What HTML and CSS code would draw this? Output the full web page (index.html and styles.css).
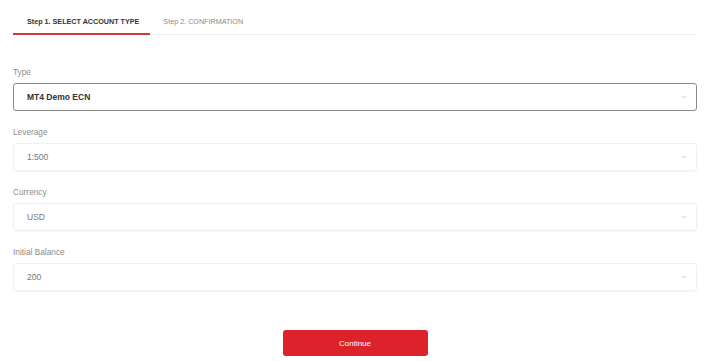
FILE: index.html
```html
<!DOCTYPE html>
<html>
<head>
<meta charset="utf-8">
<link rel="stylesheet" href="styles.css">
</head>
<body>
<div class="page">
  <div class="tabs">
    <div class="tab active">Step 1. SELECT ACCOUNT TYPE</div>
    <div class="tab">Step 2. CONFIRMATION</div>
  </div>
  <form class="form">
    <div class="field">
      <div class="label">Type</div>
      <div class="select focused"><span class="value dark">MT4 Demo ECN</span><svg class="chev" viewBox="0 0 8 5"><path d="M1 1l3 3 3-3" fill="none" stroke="#bdbdbd" stroke-width="1"/></svg></div>
    </div>
    <div class="field">
      <div class="label">Leverage</div>
      <div class="select"><span class="value">1:500</span><svg class="chev" viewBox="0 0 8 5"><path d="M1 1l3 3 3-3" fill="none" stroke="#bdbdbd" stroke-width="1"/></svg></div>
    </div>
    <div class="field">
      <div class="label">Currency</div>
      <div class="select"><span class="value">USD</span><svg class="chev" viewBox="0 0 8 5"><path d="M1 1l3 3 3-3" fill="none" stroke="#bdbdbd" stroke-width="1"/></svg></div>
    </div>
    <div class="field">
      <div class="label">Initial Balance</div>
      <div class="select"><span class="value">200</span><svg class="chev" viewBox="0 0 8 5"><path d="M1 1l3 3 3-3" fill="none" stroke="#bdbdbd" stroke-width="1"/></svg></div>
    </div>
    <div class="actions">
      <button type="button" class="btn">Continue</button>
    </div>
  </form>
</div>
</body>
</html>
```
FILE: styles.css
```css
* { box-sizing: border-box; }
html, body { margin: 0; padding: 0; background: #fff; }
body { font-family: "Liberation Sans", Arial, sans-serif; color: #333; }
.page { width: 684px; margin-left: 13px; padding-top: 13px; }
.tabs { display: flex; align-items: flex-end; border-bottom: 1px solid #ececec; }
.tab { font-size: 7.2px; line-height: 12px; padding: 3px 12px 5px 13px; color: #8a8a8a; border-bottom: 2px solid transparent; margin-bottom: -1px; }
.tab.active { font-weight: bold; color: #333; border-bottom-color: #d9343a; padding-left: 14px; padding-right: 11px; }
.form { padding-top: 31px; }
.field { margin-bottom: 15px; }
.label { font-size: 8.3px; line-height: 12px; color: #8c8c8c; margin-bottom: 5px; }
.select { height: 28px; border: 1px solid #f0f0f0; border-radius: 3px; display: flex; align-items: center; justify-content: space-between; padding: 0 9px 0 13px; box-shadow: 0 1px 2px rgba(0,0,0,0.04); }
.select.focused { border-color: #8a8a8a; box-shadow: none; }
.value { font-size: 8.5px; color: #777; }
.value.dark { color: #333; font-weight: bold; }
.chev { width: 6px; height: 4px; }
.actions { display: flex; justify-content: center; padding-top: 24px; }
.btn { width: 145px; height: 26px; border: 0; border-radius: 3px; background: #dc222b; color: #fff; font-family: "Liberation Sans", Arial, sans-serif; font-size: 8px; }
```
